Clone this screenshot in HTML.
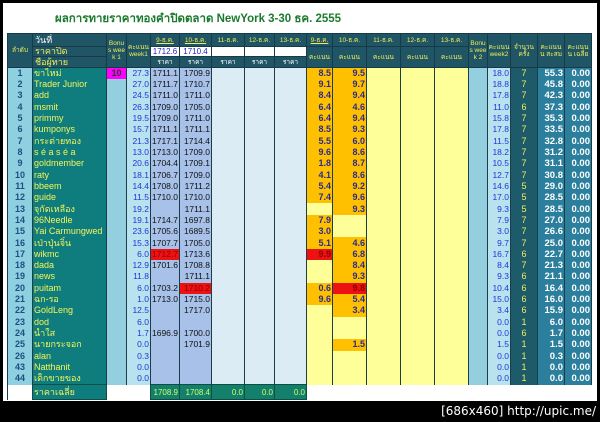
<!DOCTYPE html>
<html><head><meta charset="utf-8">
<style>
html,body{margin:0;padding:0;background:#000;}
body{width:600px;height:422px;position:relative;overflow:hidden;font-family:"Liberation Sans","Noto Sans CJK SC",sans-serif;}
#pg{position:absolute;left:3px;top:3px;width:594px;height:398px;background:#fff;}
#title{position:absolute;left:55px;top:10px;font-weight:bold;font-size:11.5px;color:#1c7a2e;white-space:nowrap;}
#bot{position:absolute;left:0;top:401px;width:596px;height:21px;text-align:right;color:#fff;font-size:12px;line-height:21px;font-family:"DejaVu Sans",sans-serif;}
table{position:absolute;left:7px;top:33px;border-collapse:collapse;table-layout:fixed;width:584px;font-size:8px;}
td{padding:0 1px;overflow:hidden;white-space:nowrap;border-left:1px solid #1b3d4a;border-right:1px solid #1b3d4a;}
thead td{background:#1f5565;color:#f2ee5a;text-align:center;font-size:6.5px;line-height:7px;border:1px solid #163a48;white-space:normal;word-break:break-all;padding:0;}
thead tr.h1{height:13px}thead tr.h2{height:10px}thead tr.h3{height:11px}
thead td.w{background:#fff;color:#2222cc;font-size:8px;}
thead td.u{text-decoration:underline;}
thead td.nm{text-align:left;font-size:9px;padding-left:2px;white-space:nowrap;}
thead td.rh{color:#fff;}
tbody tr{height:11.32px;line-height:11px;}
tbody td:nth-child(1){background:#8ecfe0;color:#1d4f80;font-weight:bold;text-align:center;font-size:9px;}
tbody td:nth-child(2){background:#0f7d7d;color:#f5f55a;font-size:9px;}
tbody td:nth-child(3){background:#94cfe0;text-align:right;}
tbody td:nth-child(4){background:#b9e2ef;color:#2233dd;text-align:right;font-size:8.5px;}
tbody td:nth-child(5),tbody td:nth-child(6){background:#a7c1e8;color:#111;text-align:right;font-size:8.5px;}
tbody td:nth-child(7),tbody td:nth-child(8),tbody td:nth-child(9){background:#dcecf4;}
tbody td:nth-child(10),tbody td:nth-child(11){background:#ffff99;color:#2a2a90;font-weight:bold;text-align:right;font-size:9px;}
tbody td:nth-child(12),tbody td:nth-child(13),tbody td:nth-child(14){background:#ffff99;}
tbody td:nth-child(15){background:#94cfe0;}
tbody td:nth-child(16){background:#b9e2ef;color:#2233dd;text-align:right;font-size:8.5px;}
tbody td:nth-child(17){background:#1d5a6a;color:#f2ee5a;text-align:center;font-size:9px;}
tbody td:nth-child(18),tbody td:nth-child(19){background:#2b7f9c;color:#fff;font-weight:bold;text-align:right;font-size:9.5px;}
tbody td.o{background:#ffc000 !important;}
tbody td.r{background:#ee1111 !important;color:#880000 !important;}
tbody td.m{background:#ff00ff !important;color:#333;font-weight:bold;text-align:center;font-size:9px;}
tfoot tr{height:12px;}
tfoot td{border:none;background:#fff;}
tfoot td.t{background:#14806c;color:#ccff66;text-align:right;border:1px solid #0b4f45;}
tfoot td.n{background:#0f7d7d;color:#f5f55a;text-align:left;font-size:9px;border:1px solid #0b4f45;}
</style></head><body>
<div id="pg"></div>
<div id="title">ผลการทายราคาทองคำปิดตลาด NewYork 3-30 ธค. 2555</div>
<table>
<colgroup><col style="width:25px"><col style="width:74px"><col style="width:20px"><col style="width:24px"><col style="width:29px"><col style="width:32px"><col style="width:33px"><col style="width:30px"><col style="width:32px"><col style="width:26px"><col style="width:34px"><col style="width:34px"><col style="width:34px"><col style="width:34px"><col style="width:19px"><col style="width:23px"><col style="width:27px"><col style="width:27px"><col style="width:27px"></colgroup>
<thead>
<tr class="h1"><td rowspan="3">ลำดับ</td><td class="nm" style="color:#fff">วันที่</td><td rowspan="3">Bonu s week 1</td><td rowspan="3">คะแนน week1</td><td class="u">9-ธ.ค.</td><td class="u">10-ธ.ค.</td><td>11-ธ.ค.</td><td>12-ธ.ค.</td><td>13-ธ.ค.</td><td class="u">9-ธ.ค.</td><td>10-ธ.ค.</td><td>11-ธ.ค.</td><td>12-ธ.ค.</td><td>13-ธ.ค.</td><td rowspan="3">Bonu s week 2</td><td rowspan="3">คะแนน week2</td><td rowspan="3">จำนวน ครั้ง</td><td rowspan="3">คะแนน น สะสม</td><td rowspan="3">คะแนน น เฉลี่ย</td></tr>
<tr class="h2"><td class="nm">ราคาปิด</td><td class="w">1712.6</td><td class="w">1710.4</td><td class="w"></td><td class="w"></td><td class="w"></td><td rowspan="2">คะแนน</td><td rowspan="2">คะแนน</td><td rowspan="2">คะแนน</td><td rowspan="2">คะแนน</td><td rowspan="2">คะแนน</td></tr>
<tr class="h3"><td class="nm">ชื่อผู้ทาย</td><td class="rh">ราคา</td><td class="rh">ราคา</td><td class="rh">ราคา</td><td class="rh">ราคา</td><td class="rh">ราคา</td></tr>
</thead>
<tbody>
<tr><td>1</td><td>ขาไหม่</td><td class="m">10</td><td>27.3</td><td>1711.1</td><td>1709.9</td><td></td><td></td><td></td><td class="o">8.5</td><td class="o">9.5</td><td></td><td></td><td></td><td></td><td>18.0</td><td>7</td><td>55.3</td><td>0.00</td></tr>
<tr><td>2</td><td>Trader Junior</td><td></td><td>27.0</td><td>1711.7</td><td>1710.7</td><td></td><td></td><td></td><td class="o">9.1</td><td class="o">9.7</td><td></td><td></td><td></td><td></td><td>18.8</td><td>7</td><td>45.8</td><td>0.00</td></tr>
<tr><td>3</td><td>add</td><td></td><td>24.5</td><td>1711.0</td><td>1711.0</td><td></td><td></td><td></td><td class="o">8.4</td><td class="o">9.4</td><td></td><td></td><td></td><td></td><td>17.8</td><td>7</td><td>42.3</td><td>0.00</td></tr>
<tr><td>4</td><td>msmit</td><td></td><td>26.3</td><td>1709.0</td><td>1705.0</td><td></td><td></td><td></td><td class="o">6.4</td><td class="o">4.6</td><td></td><td></td><td></td><td></td><td>11.0</td><td>6</td><td>37.3</td><td>0.00</td></tr>
<tr><td>5</td><td>primmy</td><td></td><td>19.5</td><td>1709.0</td><td>1711.0</td><td></td><td></td><td></td><td class="o">6.4</td><td class="o">9.4</td><td></td><td></td><td></td><td></td><td>15.8</td><td>7</td><td>35.3</td><td>0.00</td></tr>
<tr><td>6</td><td>kumponys</td><td></td><td>15.7</td><td>1711.1</td><td>1711.1</td><td></td><td></td><td></td><td class="o">8.5</td><td class="o">9.3</td><td></td><td></td><td></td><td></td><td>17.8</td><td>7</td><td>33.5</td><td>0.00</td></tr>
<tr><td>7</td><td>กระต่ายทอง</td><td></td><td>21.3</td><td>1717.1</td><td>1714.4</td><td></td><td></td><td></td><td class="o">5.5</td><td class="o">6.0</td><td></td><td></td><td></td><td></td><td>11.5</td><td>7</td><td>32.8</td><td>0.00</td></tr>
<tr><td>8</td><td>s é a s é a</td><td></td><td>13.0</td><td>1713.0</td><td>1709.0</td><td></td><td></td><td></td><td class="o">9.6</td><td class="o">8.6</td><td></td><td></td><td></td><td></td><td>18.2</td><td>7</td><td>31.2</td><td>0.00</td></tr>
<tr><td>9</td><td>goldmember</td><td></td><td>20.6</td><td>1704.4</td><td>1709.1</td><td></td><td></td><td></td><td class="o">1.8</td><td class="o">8.7</td><td></td><td></td><td></td><td></td><td>10.5</td><td>7</td><td>31.1</td><td>0.00</td></tr>
<tr><td>10</td><td>raty</td><td></td><td>18.1</td><td>1706.7</td><td>1709.0</td><td></td><td></td><td></td><td class="o">4.1</td><td class="o">8.6</td><td></td><td></td><td></td><td></td><td>12.7</td><td>7</td><td>30.8</td><td>0.00</td></tr>
<tr><td>11</td><td>bbeem</td><td></td><td>14.4</td><td>1708.0</td><td>1711.2</td><td></td><td></td><td></td><td class="o">5.4</td><td class="o">9.2</td><td></td><td></td><td></td><td></td><td>14.6</td><td>5</td><td>29.0</td><td>0.00</td></tr>
<tr><td>12</td><td>guide</td><td></td><td>11.5</td><td>1710.0</td><td>1710.0</td><td></td><td></td><td></td><td class="o">7.4</td><td class="o">9.6</td><td></td><td></td><td></td><td></td><td>17.0</td><td>5</td><td>28.5</td><td>0.00</td></tr>
<tr><td>13</td><td>จุกัดเหลือง</td><td></td><td>19.2</td><td></td><td>1711.1</td><td></td><td></td><td></td><td></td><td class="o">9.3</td><td></td><td></td><td></td><td></td><td>9.3</td><td>5</td><td>28.5</td><td>0.00</td></tr>
<tr><td>14</td><td>96Needle</td><td></td><td>19.1</td><td>1714.7</td><td>1697.8</td><td></td><td></td><td></td><td class="o">7.9</td><td></td><td></td><td></td><td></td><td></td><td>7.9</td><td>7</td><td>27.0</td><td>0.00</td></tr>
<tr><td>15</td><td>Yai Carmungwed</td><td></td><td>23.6</td><td>1705.6</td><td>1689.5</td><td></td><td></td><td></td><td class="o">3.0</td><td></td><td></td><td></td><td></td><td></td><td>3.0</td><td>7</td><td>26.6</td><td>0.00</td></tr>
<tr><td>16</td><td>เป่าปุ่นจิ๋น</td><td></td><td>15.3</td><td>1707.7</td><td>1705.0</td><td></td><td></td><td></td><td class="o">5.1</td><td class="o">4.6</td><td></td><td></td><td></td><td></td><td>9.7</td><td>7</td><td>25.0</td><td>0.00</td></tr>
<tr><td>17</td><td>wikmc</td><td></td><td>6.0</td><td class="r">1712.7</td><td>1713.6</td><td></td><td></td><td></td><td class="r">9.9</td><td class="o">6.8</td><td></td><td></td><td></td><td></td><td>16.7</td><td>6</td><td>22.7</td><td>0.00</td></tr>
<tr><td>18</td><td>dada</td><td></td><td>12.9</td><td>1701.6</td><td>1708.8</td><td></td><td></td><td></td><td></td><td class="o">8.4</td><td></td><td></td><td></td><td></td><td>8.4</td><td>7</td><td>21.3</td><td>0.00</td></tr>
<tr><td>19</td><td>news</td><td></td><td>11.8</td><td></td><td>1711.1</td><td></td><td></td><td></td><td></td><td class="o">9.3</td><td></td><td></td><td></td><td></td><td>9.3</td><td>6</td><td>21.1</td><td>0.00</td></tr>
<tr><td>20</td><td>puitam</td><td></td><td>6.0</td><td>1703.2</td><td class="r">1710.2</td><td></td><td></td><td></td><td class="o">0.6</td><td class="r">9.8</td><td></td><td></td><td></td><td></td><td>10.4</td><td>6</td><td>16.4</td><td>0.00</td></tr>
<tr><td>21</td><td>ฉก-รอ</td><td></td><td>1.0</td><td>1713.0</td><td>1715.0</td><td></td><td></td><td></td><td class="o">9.6</td><td class="o">5.4</td><td></td><td></td><td></td><td></td><td>15.0</td><td>6</td><td>16.0</td><td>0.00</td></tr>
<tr><td>22</td><td>GoldLeng</td><td></td><td>12.5</td><td></td><td>1717.0</td><td></td><td></td><td></td><td></td><td class="o">3.4</td><td></td><td></td><td></td><td></td><td>3.4</td><td>6</td><td>15.9</td><td>0.00</td></tr>
<tr><td>23</td><td>dod</td><td></td><td>6.0</td><td></td><td></td><td></td><td></td><td></td><td></td><td></td><td></td><td></td><td></td><td></td><td>0.0</td><td>1</td><td>6.0</td><td>0.00</td></tr>
<tr><td>24</td><td>น้ำใส</td><td></td><td>1.7</td><td>1696.9</td><td>1700.0</td><td></td><td></td><td></td><td></td><td></td><td></td><td></td><td></td><td></td><td>0.0</td><td>6</td><td>1.7</td><td>0.00</td></tr>
<tr><td>25</td><td>นายกระจอก</td><td></td><td>0.0</td><td></td><td>1701.9</td><td></td><td></td><td></td><td></td><td class="o">1.5</td><td></td><td></td><td></td><td></td><td>1.5</td><td>1</td><td>1.5</td><td>0.00</td></tr>
<tr><td>26</td><td>alan</td><td></td><td>0.3</td><td></td><td></td><td></td><td></td><td></td><td></td><td></td><td></td><td></td><td></td><td></td><td>0.0</td><td>1</td><td>0.3</td><td>0.00</td></tr>
<tr><td>43</td><td>Natthanit</td><td></td><td>0.0</td><td></td><td></td><td></td><td></td><td></td><td></td><td></td><td></td><td></td><td></td><td></td><td>0.0</td><td>1</td><td>0.0</td><td>0.00</td></tr>
<tr><td>44</td><td>เด็กขายของ</td><td></td><td>0.0</td><td></td><td></td><td></td><td></td><td></td><td></td><td></td><td></td><td></td><td></td><td></td><td>0.0</td><td>1</td><td>0.0</td><td>0.00</td></tr>
</tbody>
<tfoot>
<tr><td style="border-left:1px solid #1b3d4a"></td><td class="n">ราคาเฉลี่ย</td><td></td><td></td><td class="t">1708.9</td><td class="t">1708.4</td><td class="t">0.0</td><td class="t">0.0</td><td class="t">0.0</td><td></td><td></td><td></td><td></td><td></td><td></td><td></td><td></td><td></td><td></td></tr>
</tfoot>
</table>
<div id="bot">[686x460] http://upic.me/</div>
</body></html>
